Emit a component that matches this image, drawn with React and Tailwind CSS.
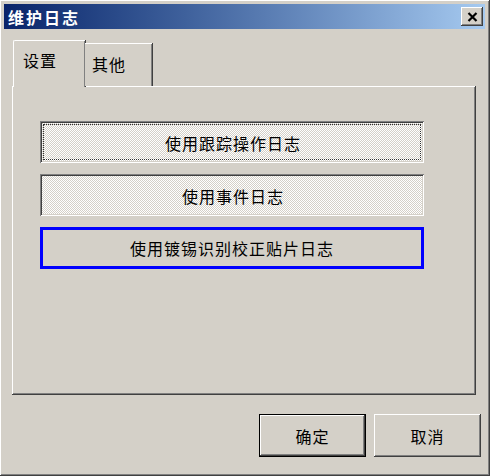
import React from "react";

const raised =
  "shadow-[inset_-1px_-1px_#404040,inset_1px_1px_#ffffff,inset_-2px_-2px_#808080,inset_2px_2px_#d4d0c8]";
const sunken =
  "shadow-[inset_1px_1px_#808080,inset_-1px_-1px_#ffffff,inset_2px_2px_#404040,inset_-2px_-2px_#d4d0c8]";
const dither =
  "bg-[repeating-conic-gradient(#ffffff_0%_25%,#d4d0c8_0%_50%)] bg-[length:2px_2px]";

function LogButton({ label, focused, selected }) {
  if (selected) {
    return (
      <button className="h-[42px] w-[384px] border-[3px] border-[#0000ff] bg-[#d4d0c8] text-[16px] tracking-[1px] text-black">
        {label}
      </button>
    );
  }
  return (
    <button
      className={`h-[42px] w-[384px] p-[3px] text-[16px] tracking-[1px] text-black ${sunken} ${dither}`}
    >
      <div
        className={`flex h-full w-full items-center justify-center pt-[2px] pl-[2px] ${
          focused ? "border border-dotted border-[#303030]" : ""
        }`}
      >
        {label}
      </div>
    </button>
  );
}

export default function App() {
  return (
    <div
      className={`flex h-[476px] w-[490px] flex-col bg-[#d4d0c8] pt-[4px] pl-[4px] pr-[5px] pb-[4px] ${raised}`}
      style={{ fontFamily: '"Noto Sans CJK SC", "Noto Sans", sans-serif' }}
    >
      {/* title bar */}
      <div className="flex h-[25px] items-center justify-between bg-gradient-to-r from-[#0a246a] to-[#a6caf0] pl-[4px] pr-[2px]">
        <span className="text-[16px] font-bold tracking-[2px] text-white">维护日志</span>
        <button
          className={`flex h-[19px] w-[22px] items-center justify-center bg-[#d4d0c8] ${raised}`}
        >
          <svg width="11" height="10" viewBox="0 0 11 10">
            <path d="M1.5 1 L9.5 9 M9.5 1 L1.5 9" stroke="#000" strokeWidth="2.2" />
          </svg>
        </button>
      </div>

      {/* tabs */}
      <div className="flex flex-1 flex-col pt-[11px] pl-[8px]">
        <div className="relative z-10 flex h-[47px] items-end">
          <div className="ml-[1px] flex h-[47px] w-[72px] items-start rounded-tl-[2px] border-t border-l border-white bg-[#d4d0c8] pt-[7px] pl-[9px] text-[16px] tracking-[1px] shadow-[inset_-1px_0_#808080,1px_0_#404040]">
            设置
          </div>
          <div className="mb-[1px] flex h-[43px] w-[67px] items-start border-t border-white bg-[#d4d0c8] pt-[8px] pl-[7px] text-[16px] tracking-[1px] shadow-[inset_-1px_0_#808080,1px_0_#404040]">
            其他
          </div>
        </div>
        <div
          className={`-mt-[1px] flex h-[309px] w-[464px] flex-col gap-[11px] pt-[35px] pl-[28px] ${raised}`}
        >
          <LogButton label="使用跟踪操作日志" focused />
          <LogButton label="使用事件日志" />
          <LogButton label="使用镀锡识别校正贴片日志" selected />
        </div>

        {/* dialog buttons */}
        <div className="mt-[19px] flex justify-end gap-[8px] pr-[4px]">
          <button className="h-[43px] w-[107px] border border-black bg-[#d4d0c8] p-0">
            <div
              className={`flex h-full w-full items-center justify-center text-[16px] tracking-[1px] ${raised}`}
            >
              确定
            </div>
          </button>
          <button
            className={`flex h-[43px] w-[107px] items-center justify-center bg-[#d4d0c8] text-[16px] tracking-[1px] ${raised}`}
          >
            取消
          </button>
        </div>
      </div>
    </div>
  );
}
